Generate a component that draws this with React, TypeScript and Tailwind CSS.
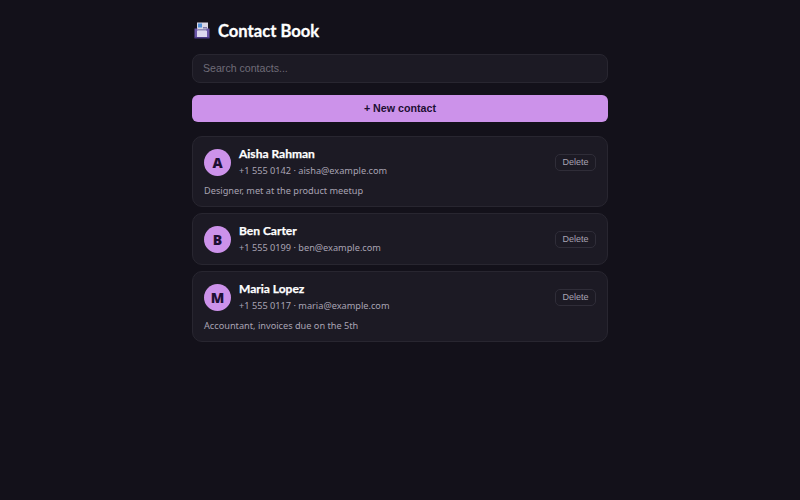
const contacts = [
  { name: 'Aisha Rahman', phone: '+1 555 0142', email: 'aisha@example.com', note: 'Designer, met at the product meetup' },
  { name: 'Ben Carter', phone: '+1 555 0199', email: 'ben@example.com', note: '' },
  { name: 'Maria Lopez', phone: '+1 555 0117', email: 'maria@example.com', note: 'Accountant, invoices due on the 5th' },
]

function CardIndexIcon() {
  return (
    <svg width="20" height="20" viewBox="0 0 20 20" className="flex-none">
      <rect x="5" y="1.5" width="11" height="14" fill="#d9d6e6" />
      <rect x="6" y="2.5" width="4" height="4" fill="#4f8fd8" />
      <rect x="11" y="6" width="4" height="1.5" fill="#7f7aa8" />
      <rect x="6" y="8" width="9" height="1.5" fill="#8f8ab8" />
      <path d="M2.5 7.5h3v3h9v-3h3v9h-15z" fill="#6a55a8" />
      <rect x="5" y="10" width="10" height="6" fill="#ddd8ee" />
      <rect x="2.5" y="16" width="15" height="1.5" fill="#4b3a85" />
    </svg>
  )
}

function ContactCard({ name, phone, email, note }: { name: string; phone: string; email: string; note: string }) {
  return (
    <div className="rounded-[10px] border border-[#282630] bg-[#1c1a24] px-[11px] pt-[8.5px] pb-[7.5px]">
      <div className="flex items-center gap-2">
        <div className="flex h-[27px] w-[27px] flex-none items-center justify-center rounded-full bg-[#cc92ea] font-['Noto_Sans',sans-serif] text-[14px] font-black text-[#1d0f33]">
          {name[0]}
        </div>
        <div className="min-w-0 flex-1">
          <div className="text-[12px] leading-[16px] font-bold text-white [-webkit-text-stroke:0.25px_#ffffff]">{name}</div>
          <div className="mt-[1.5px] font-['Noto_Sans',sans-serif] text-[9.2px] leading-[16px] text-[#a8a3b3]">
            {phone} · {email}
          </div>
        </div>
        <button
          type="button"
          className="h-[17px] w-[41px] rounded-[5px] border border-[#2f2d38] bg-transparent font-['Liberation_Sans',sans-serif] text-[9px] leading-none text-[#a8a3b3]"
        >
          Delete
        </button>
      </div>
      {note && (
        <div className="mt-[4px] font-['Noto_Sans',sans-serif] text-[9.2px] leading-[15px] text-[#a8a3b3]">{note}</div>
      )}
    </div>
  )
}

export default function App() {
  return (
    <div className="flex min-h-[500px] justify-center bg-[#13111a] font-['Lato',sans-serif]">
      <div className="flex w-[416px] flex-col pt-[20px]">
        <div className="flex h-[22px] items-center gap-[6px]">
          <CardIndexIcon />
          <h1 className="text-[16.6px] font-bold text-white [-webkit-text-stroke:0.3px_#ffffff]">Contact Book</h1>
        </div>
        <input
          placeholder="Search contacts..."
          className="mt-[12px] h-[29px] w-full rounded-[8px] border border-[#282630] bg-[#1c1a24] px-[10px] pb-[2px] font-['Liberation_Sans',sans-serif] text-[10.6px] text-white outline-none placeholder:text-[#6f6c78]"
        />
        <button
          type="button"
          className="mt-[12px] h-[27px] w-full rounded-[6px] bg-[#cc92ea] font-['Liberation_Sans',sans-serif] text-[10.7px] font-bold text-[#1d0f33]"
        >
          + New contact
        </button>
        <div className="mt-[14px] flex flex-col gap-[6.5px]">
          {contacts.map((c) => (
            <ContactCard key={c.name} {...c} />
          ))}
        </div>
      </div>
    </div>
  )
}
